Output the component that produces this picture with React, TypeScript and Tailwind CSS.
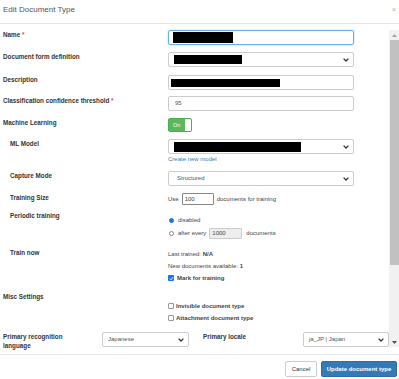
import React from "react";

const Chevron = () => (
  <svg width="6" height="4" viewBox="0 0 6 4" className="shrink-0">
    <path d="M0.6 0.6 L3 3 L5.4 0.6" fill="none" stroke="#333" strokeWidth="1.3" />
  </svg>
);

function Select({
  children,
  className = "",
}: {
  children?: React.ReactNode;
  className?: string;
}) {
  return (
    <div
      className={`h-[15px] border border-[#ccc] rounded-[2px] bg-white flex items-center justify-between pl-[5px] pr-[4px] text-[6px] text-[#555] ${className}`}
    >
      <div className="flex items-center">{children}</div>
      <Chevron />
    </div>
  );
}

const Redact = ({ w, h }: { w: number; h: number }) => (
  <div className="bg-black" style={{ width: w, height: h }} />
);

function Row({
  label,
  required,
  indent,
  className = "",
  children,
}: {
  label: string;
  required?: boolean;
  indent?: boolean;
  className?: string;
  children?: React.ReactNode;
}) {
  return (
    <div className={`flex items-start ${className}`}>
      <div
        className={`w-[165px] shrink-0 font-bold text-[6.3px] leading-[9px] text-[#333] ${
          indent ? "pl-[7px]" : ""
        }`}
      >
        {label}
        {required && <span className="text-[#d9534f]"> *</span>}
      </div>
      <div className="w-[186px]">{children}</div>
    </div>
  );
}

const Radio = ({ on }: { on?: boolean }) =>
  on ? (
    <span className="w-[5px] h-[5px] rounded-full bg-[#1a73e8] border border-[#1a73e8] shrink-0" />
  ) : (
    <span className="w-[5px] h-[5px] rounded-full bg-white border border-[#888] shrink-0" />
  );

const Check = ({ on }: { on?: boolean }) =>
  on ? (
    <span className="w-[6px] h-[6px] rounded-[1px] bg-[#1a73e8] flex items-center justify-center shrink-0">
      <svg width="5" height="5" viewBox="0 0 5 5">
        <path d="M0.8 2.6 L2 3.8 L4.2 1" fill="none" stroke="#fff" strokeWidth="0.9" />
      </svg>
    </span>
  ) : (
    <span className="w-[6px] h-[6px] rounded-[1px] bg-white border border-[#999] shrink-0" />
  );

export default function App() {
  return (
    <div className="w-[399px] h-[379px] bg-white overflow-hidden font-['Liberation_Sans',Arial,sans-serif] text-[#333]">
      {/* Header */}
      <div className="h-[24px] border-b border-[#e5e5e5] flex items-center justify-between pl-[3px] pr-[3px] pb-[4px]">
        <span className="text-[8px] text-[#555]">Edit Document Type</span>
        <span className="text-[7px] text-[#aaa] leading-none">×</span>
      </div>

      {/* Body */}
      <div className="flex h-[330px]">
        <div className="flex-1 pl-[3px] pt-[6px]">
          <Row label="Name" required>
            <div className="h-[15px] border border-[#66afe9] rounded-[2px] shadow-[0_0_2px_rgba(102,175,233,0.6)] flex items-center pl-[4px]">
              <Redact w={60} h={11} />
            </div>
          </Row>

          <Row label="Document form definition" className="mt-[7px]">
            <Select>
              <Redact w={68} h={9} />
            </Select>
          </Row>

          <Row label="Description" className="mt-[8px]">
            <div className="h-[15px] border border-[#ccc] rounded-[2px] flex items-center pl-[2px]">
              <Redact w={109} h={8} />
            </div>
          </Row>

          <Row label="Classification confidence threshold" required className="mt-[6px]">
            <div className="h-[15px] border border-[#ccc] rounded-[2px] flex items-center pl-[6px] text-[6px] text-[#555]">
              95
            </div>
          </Row>

          <Row label="Machine Learning" className="mt-[7px]">
            <div className="w-[24px] h-[14px] rounded-[2px] border border-[#4cae4c] bg-[#5cb85c] flex items-stretch overflow-hidden">
              <div className="flex-1 flex items-center pl-[4px] text-[5.5px] text-white">On</div>
              <div className="w-[6px] bg-white" />
            </div>
          </Row>

          <Row label="ML Model" indent className="mt-[7px]">
            <Select>
              <Redact w={127} h={10} />
            </Select>
            <div className="mt-[1px] text-[6px] leading-[9px] text-[#337ab7]">Create new model</div>
          </Row>

          <Row label="Capture Mode" indent className="mt-[7px]">
            <Select className="pl-[8px]">Structured</Select>
          </Row>

          <Row label="Training Size" indent className="mt-[7px]">
            <div className="flex items-center h-[12px] text-[6px] text-[#444]">
              <span>Use</span>
              <div className="ml-[3px] w-[32px] h-[12px] border border-[#888] rounded-[1px] flex items-center pl-[2px]">
                100
              </div>
              <span className="ml-[3px]">documents for training</span>
            </div>
          </Row>

          <Row label="Periodic training" indent className="mt-[6px]">
            <div className="pt-[4px] text-[6px] text-[#444]">
              <div className="h-[10px] flex items-center gap-[4px] pl-[1px]">
                <Radio on />
                <span>disabled</span>
              </div>
              <div className="mt-[2px] h-[12px] flex items-center pl-[1px]">
                <Radio />
                <span className="ml-[4px]">after every</span>
                <div className="ml-[3px] w-[33px] h-[11px] border border-[#ccc] bg-[#eee] rounded-[1px] flex items-center pl-[2px]">
                  1000
                </div>
                <span className="ml-[4px]">documents</span>
              </div>
            </div>
          </Row>

          <Row label="Train now" indent className="mt-[9px]">
            <div className="text-[6px] text-[#444]">
              <div className="h-[12px] flex items-center">
                Last trained:&nbsp;<b>N/A</b>
              </div>
              <div className="h-[12px] flex items-center">
                New documents available:&nbsp;<b>1</b>
              </div>
              <div className="h-[12px] flex items-center gap-[3px] font-bold">
                <Check on />
                Mark for training
              </div>
            </div>
          </Row>

          <Row label="Misc Settings" className="mt-[8px]">
            <div className="pt-[8px] text-[6px] text-[#444] font-bold">
              <div className="h-[12px] flex items-center gap-[2px]">
                <Check />
                Invisible document type
              </div>
              <div className="h-[12px] flex items-center gap-[2px]">
                <Check />
                Attachment document type
              </div>
            </div>
          </Row>

          <div className="mt-[8px] flex items-start">
            <div className="w-[99px] shrink-0 font-bold text-[6.3px] leading-[9px] text-[#333]">
              <div className="w-[70px]">Primary recognition language</div>
            </div>
            <Select className="w-[87px] shrink-0">Japanese</Select>
            <div className="w-[114px] shrink-0 pl-[14px] font-bold text-[6.3px] leading-[9px] text-[#333]">
              Primary locale
            </div>
            <Select className="w-[86px] shrink-0">ja_JP | Japan</Select>
          </div>
        </div>

        {/* Scrollbar */}
        <div className="w-[11px] shrink-0 mt-[6px] mb-[7px] bg-[#f1f1f1] flex flex-col items-center">
          <div className="h-[10px] flex items-center justify-center">
            <svg width="5" height="3" viewBox="0 0 5 3">
              <path d="M0 3 L2.5 0 L5 3 Z" fill="#a3a3a3" />
            </svg>
          </div>
          <div className="w-[9px] h-[225px] bg-[#c1c1c1]" />
          <div className="flex-1" />
          <div className="h-[10px] flex items-center justify-center">
            <svg width="5" height="3" viewBox="0 0 5 3">
              <path d="M0 0 L2.5 3 L5 0 Z" fill="#505050" />
            </svg>
          </div>
        </div>
      </div>

      {/* Footer */}
      <div className="border-t border-[#e5e5e5] flex justify-end gap-[4px] pt-[6px] pr-[2px]">
        <button className="w-[32px] h-[16px] border border-[#ccc] rounded-[2px] bg-white text-[6px] text-[#333]">
          Cancel
        </button>
        <button className="w-[76px] h-[16px] border border-[#2e6da4] rounded-[2px] bg-[#337ab7] text-[6px] font-bold text-white">
          Update document type
        </button>
      </div>
    </div>
  );
}
